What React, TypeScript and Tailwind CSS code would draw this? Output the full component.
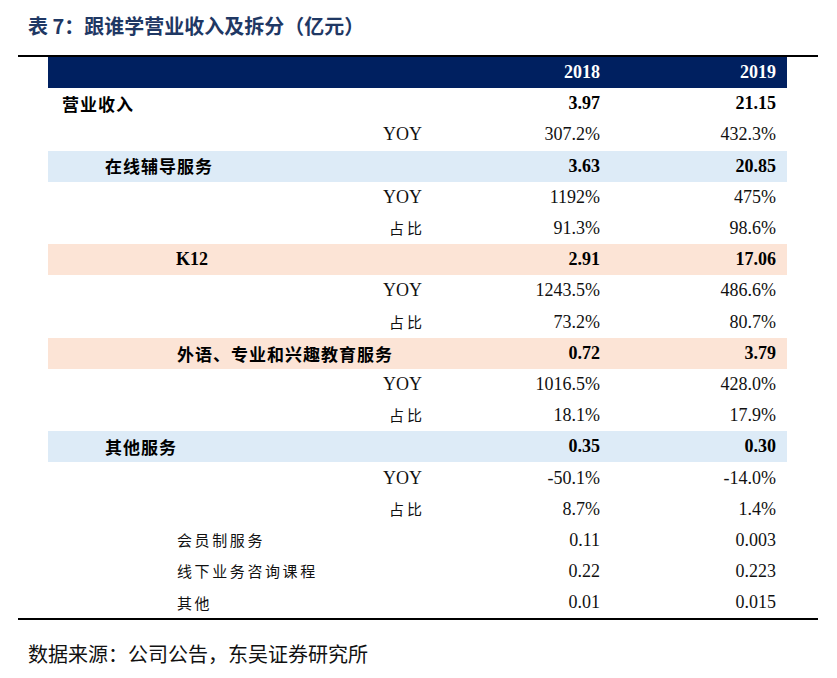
const rows: {
  label: string;
  indent: string;
  kind: "main" | "sub" | "detail";
  bg?: string;
  v1: string;
  v2: string;
}[] = [
  { label: "营业收入", indent: "pl-[14px]", kind: "main", v1: "3.97", v2: "21.15" },
  { label: "YOY", indent: "", kind: "sub", v1: "307.2%", v2: "432.3%" },
  { label: "在线辅导服务", indent: "pl-[57px]", kind: "main", bg: "bg-[#ddebf7]", v1: "3.63", v2: "20.85" },
  { label: "YOY", indent: "", kind: "sub", v1: "1192%", v2: "475%" },
  { label: "占比", indent: "", kind: "sub", v1: "91.3%", v2: "98.6%" },
  { label: "K12", indent: "pl-[128px]", kind: "main", bg: "bg-[#fce4d6]", v1: "2.91", v2: "17.06" },
  { label: "YOY", indent: "", kind: "sub", v1: "1243.5%", v2: "486.6%" },
  { label: "占比", indent: "", kind: "sub", v1: "73.2%", v2: "80.7%" },
  { label: "外语、专业和兴趣教育服务", indent: "pl-[129px]", kind: "main", bg: "bg-[#fce4d6]", v1: "0.72", v2: "3.79" },
  { label: "YOY", indent: "", kind: "sub", v1: "1016.5%", v2: "428.0%" },
  { label: "占比", indent: "", kind: "sub", v1: "18.1%", v2: "17.9%" },
  { label: "其他服务", indent: "pl-[57px]", kind: "main", bg: "bg-[#ddebf7]", v1: "0.35", v2: "0.30" },
  { label: "YOY", indent: "", kind: "sub", v1: "-50.1%", v2: "-14.0%" },
  { label: "占比", indent: "", kind: "sub", v1: "8.7%", v2: "1.4%" },
  { label: "会员制服务", indent: "pl-[129px]", kind: "detail", v1: "0.11", v2: "0.003" },
  { label: "线下业务咨询课程", indent: "pl-[129px]", kind: "detail", v1: "0.22", v2: "0.223" },
  { label: "其他", indent: "pl-[129px]", kind: "detail", v1: "0.01", v2: "0.015" },
];

const serif = "font-['Liberation_Serif','Times_New_Roman',serif]";
const cjk = "font-['Noto_Sans_CJK_SC',sans-serif]";

function Label({ r }: { r: (typeof rows)[number] }) {
  if (r.kind === "main") {
    const isLatin = /^[A-Za-z0-9]+$/.test(r.label);
    return (
      <div className={`${r.indent} ${isLatin ? `${serif} text-[18px]` : `${cjk} text-[17px] tracking-[1px]`} font-bold text-black`}>
        {r.label}
      </div>
    );
  }
  if (r.kind === "sub") {
    const isLatin = r.label === "YOY";
    return (
      <div className={`text-right pr-[1px] ${isLatin ? `${serif} text-[18px]` : `${cjk} text-[15px] tracking-[3px] mr-[-3px]`} text-[#111]`}>
        {r.label}
      </div>
    );
  }
  return (
    <div className={`${r.indent} ${cjk} text-[15px] tracking-[2.6px] text-[#111]`}>{r.label}</div>
  );
}

export default function App() {
  return (
    <div className="w-[837px] h-[678px] bg-white">
      <div className={`${cjk} pt-[12px] pl-[28px] text-[20px] font-bold text-[#1f3864] h-[55px] leading-[28px]`}>
        表 7：跟谁学营业收入及拆分（亿元）
      </div>
      <div className="ml-[18px] w-[800px] border-t-2 border-black" />
      <div className="ml-[48px] w-[739px]">
        <div className={`grid grid-cols-[375px_177px_176px_1fr] items-center h-[31.2px] bg-[#002060] text-white font-bold ${serif} text-[18px]`}>
          <div />
          <div className="text-right">2018</div>
          <div className="text-right">2019</div>
          <div />
        </div>
        {rows.map((r, i) => (
          <div
            key={i}
            className={`grid grid-cols-[375px_177px_176px_1fr] items-center h-[31.2px] ${r.bg ?? ""}`}
          >
            <Label r={r} />
            <div className={`text-right ${serif} text-[18px] ${r.kind === "main" ? "font-bold text-black" : "text-[#111]"}`}>{r.v1}</div>
            <div className={`text-right ${serif} text-[18px] ${r.kind === "main" ? "font-bold text-black" : "text-[#111]"}`}>{r.v2}</div>
            <div />
          </div>
        ))}
      </div>
      <div className="ml-[18px] w-[800px] border-t-2 border-black" />
      <div className={`${cjk} pl-[28px] pt-[19px] text-[20px] text-[#111]`}>数据来源：公司公告，东吴证券研究所</div>
    </div>
  );
}
